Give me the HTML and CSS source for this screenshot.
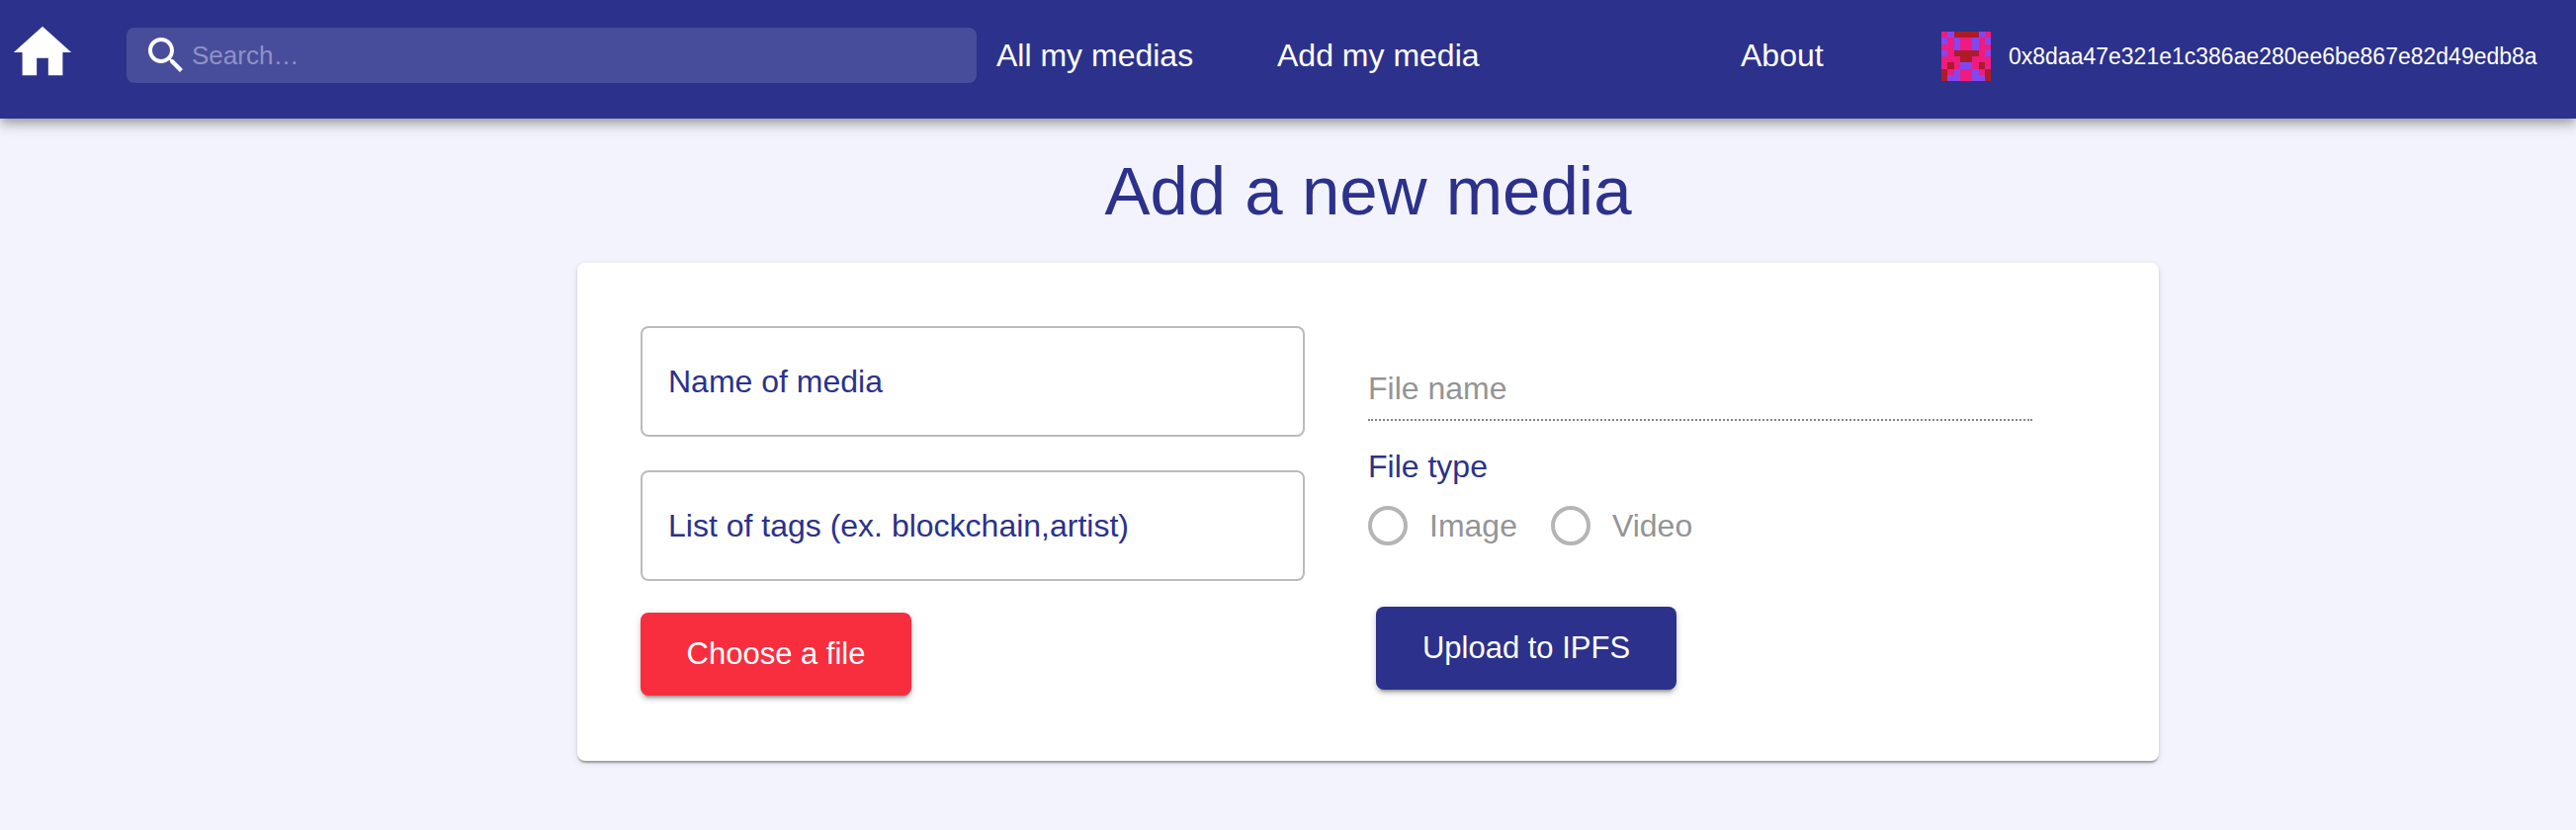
FILE: index.html
```html
<!DOCTYPE html>
<html lang="en">
<head>
<meta charset="utf-8">
<meta name="viewport" content="width=device-width, initial-scale=1">
<title>Add a new media</title>
<link rel="stylesheet" href="styles.css">
</head>
<body>
<header class="topbar">
  <a class="home" href="#" aria-label="Home">
    <svg class="home-icon" viewBox="0 0 24 24" aria-hidden="true"><path d="M10 20v-6h4v6h5v-8h3L12 3 2 12h3v8z"/></svg>
  </a>
  <label class="search">
    <svg class="search-icon" viewBox="0 0 24 24" aria-hidden="true"><path d="M15.5 14h-.79l-.28-.27C15.41 12.59 16 11.11 16 9.5 16 5.91 13.09 3 9.5 3S3 5.91 3 9.5 5.91 16 9.5 16c1.61 0 3.09-.59 4.23-1.57l.27.28v.79l5 4.99L20.49 19l-4.99-5zm-6 0C7.01 14 5 11.99 5 9.5S7.01 5 9.5 5 14 7.01 14 9.5 11.99 14 9.5 14z"/></svg>
    <input class="search-input" type="text" placeholder="Search…" aria-label="Search">
  </label>
  <a class="nav-link" href="#">All my medias</a>
  <a class="nav-link" href="#">Add my media</a>
  <a class="nav-link" href="#">About</a>
  <div class="account">
    <svg class="avatar" viewBox="0 0 8 8" shape-rendering="crispEdges" aria-hidden="true">
      <path fill="#ef1b80" d="M0 0h8v8H0z"/>
      <path fill="#8347f0" d="M1 0h1v1H1zM6 0h1v1H6zM0 1h1v1H0zM7 1h1v1H7zM2 1h1v2H2zM5 1h1v2H5zM0 3h1v1H0zM7 3h1v1H7zM3 5h2v1H3zM2 6h1v2H2zM5 6h1v2H5zM1 7h1v1H1zM6 7h1v1H6z"/>
      <path fill="#ab1c28" d="M2 0h4v1H2zM2 3h4v1H2zM3 4h2v1H3zM1 5h1v1H1zM6 5h1v1H6zM0 6h1v2H0zM7 6h1v2H7z"/>
    </svg>
    <span class="address">0x8daa47e321e1c386ae280ee6be867e82d49edb8a</span>
  </div>
</header>
<main class="page">
  <h1 class="title">Add a new media</h1>
  <form class="card">
    <div class="column">
      <input class="field" type="text" placeholder="Name of media" aria-label="Name of media">
      <input class="field" type="text" placeholder="List of tags (ex. blockchain,artist)" aria-label="List of tags">
      <button class="button button-choose" type="button">Choose a file</button>
    </div>
    <div class="column column-file">
      <input class="file-name" type="text" placeholder="File name" aria-label="File name" disabled>
      <fieldset class="file-type">
        <legend class="legend">File type</legend>
        <div class="options">
          <label class="option"><input class="radio" type="radio" name="type" disabled>Image</label>
          <label class="option"><input class="radio" type="radio" name="type" disabled>Video</label>
        </div>
      </fieldset>
      <button class="button button-upload" type="button">Upload to IPFS</button>
    </div>
  </form>
</main>
</body>
</html>
```
FILE: styles.css
```css
* {
  box-sizing: border-box;
}

body {
  margin: 0;
  min-height: 100vh;
  background: #f3f3fd;
  color: #2c318b;
  font-family: "Liberation Sans", Arial, sans-serif;
  font-size: 32px;
  line-height: 40px;
}

input,
button {
  font-family: inherit;
  font-size: inherit;
}

/* Top bar */
.topbar {
  display: grid;
  grid-template-columns: 120px 880fr 284fr 469fr 203fr 642fr;
  align-items: center;
  min-height: 120px;
  padding: 0 0 8px 8px;
  background: #2c318b;
  color: #fff;
  box-shadow: 0 4px 8px -2px rgba(0, 0, 0, 0.2), 0 8px 10px rgba(0, 0, 0, 0.14), 0 2px 20px rgba(0, 0, 0, 0.12);
}

.home {
  display: flex;
  padding-bottom: 6px;
}

.home-icon {
  width: 70px;
  height: 70px;
  fill: #fff;
}

.search {
  display: flex;
  align-items: center;
  gap: 2px;
  height: 56px;
  margin-right: 20px;
  padding-left: 16px;
  border-radius: 8px;
  background: #484d9b;
}

.search-icon {
  flex: none;
  width: 48px;
  height: 48px;
  fill: #fff;
}

.search-input {
  flex: 1;
  min-width: 0;
  padding: 0;
  border: 0;
  outline: 0;
  background: transparent;
  color: #fff;
  font-size: 26px;
}

.search-input::placeholder {
  color: #8f92c4;
  opacity: 1;
}

.nav-link {
  color: #fff;
  text-decoration: none;
  white-space: nowrap;
}

.account {
  display: flex;
  align-items: center;
  gap: 18px;
  padding-top: 2px;
}

.avatar {
  flex: none;
  width: 50px;
  height: 50px;
}

.address {
  font-size: 23px;
}

/* Page */
.page {
  display: flex;
  flex-direction: column;
  align-items: center;
  gap: 32px;
  padding: 34px 0 70px 162px;
}

.title {
  margin: 0;
  font-size: 69px;
  font-weight: 400;
  line-height: 80px;
}

.card {
  display: grid;
  grid-template-columns: 1fr 1fr;
  gap: 64px;
  width: 100%;
  max-width: 1600px;
  padding: 64px 128px 66px 64px;
  border-radius: 8px;
  background: #fff;
  box-shadow: 0 4px 2px -2px rgba(0, 0, 0, 0.2), 0 2px 2px rgba(0, 0, 0, 0.14), 0 2px 6px rgba(0, 0, 0, 0.12);
}

.column {
  display: flex;
  flex-direction: column;
  align-items: flex-start;
}

.field {
  width: 100%;
  height: 112px;
  margin-bottom: 34px;
  padding: 0 26px;
  border: 2px solid #bbb;
  border-radius: 8px;
  background: #fff;
  color: #2c318b;
}

.field::placeholder {
  color: #2c318b;
  opacity: 1;
}

.field + .button {
  margin-top: -2px;
}

.column-file {
  padding-top: 36px;
}

.file-name {
  width: 100%;
  height: 60px;
  padding: 0 0 4px;
  border: 0;
  border-bottom: 2px dotted #858585;
  background: transparent;
}

.file-name::placeholder {
  color: #949494;
  opacity: 1;
}

.file-type {
  margin: 26px 0 0;
  padding: 0;
  border: 0;
}

.legend {
  padding: 0;
}

.options {
  display: flex;
  gap: 34px;
  margin-top: 20px;
  color: #949494;
}

.option {
  display: flex;
  align-items: center;
  gap: 22px;
}

.radio {
  appearance: none;
  width: 40px;
  height: 40px;
  margin: 0;
  border: 4px solid #b5b5b5;
  border-radius: 50%;
}

.button {
  height: 84px;
  padding: 0 42px;
  border: 0;
  border-radius: 8px;
  color: #fff;
  font-size: 31px;
  box-shadow: 0 6px 2px -4px rgba(0, 0, 0, 0.2), 0 4px 4px rgba(0, 0, 0, 0.14), 0 2px 10px rgba(0, 0, 0, 0.12);
}

.button-choose {
  min-width: 274px;
  background: #f82e3e;
}

.button-upload {
  min-width: 304px;
  margin: 62px 0 0 8px;
  background: #2c318b;
}
```
